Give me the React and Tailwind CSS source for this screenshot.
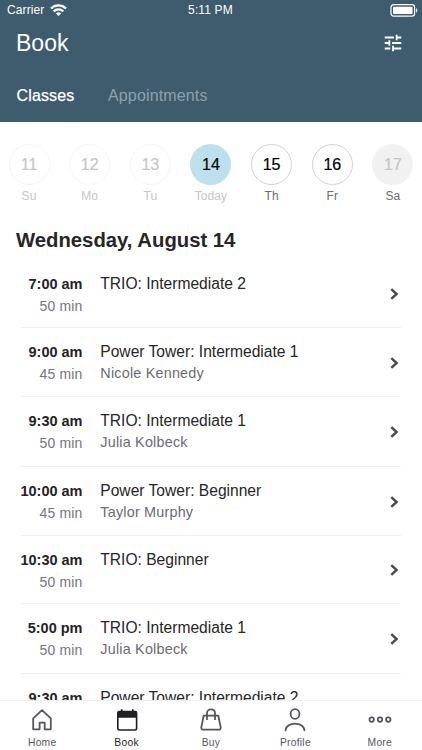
import React from 'react';
import clsx from 'clsx';
import { MdTune } from 'react-icons/md';

const days = [
    { num: '11', label: 'Su', state: 'past' },
    { num: '12', label: 'Mo', state: 'past' },
    { num: '13', label: 'Tu', state: 'past' },
    { num: '14', label: 'Today', state: 'today' },
    { num: '15', label: 'Th', state: 'open' },
    { num: '16', label: 'Fr', state: 'open' },
    { num: '17', label: 'Sa', state: 'closed' },
];

const classes = [
    { time: '7:00 am', length: '50 min', name: 'TRIO: Intermediate 2' },
    { time: '9:00 am', length: '45 min', name: 'Power Tower: Intermediate 1', teacher: 'Nicole Kennedy' },
    { time: '9:30 am', length: '50 min', name: 'TRIO: Intermediate 1', teacher: 'Julia Kolbeck' },
    { time: '10:00 am', length: '45 min', name: 'Power Tower: Beginner', teacher: 'Taylor Murphy' },
    { time: '10:30 am', length: '50 min', name: 'TRIO: Beginner' },
    { time: '5:00 pm', length: '50 min', name: 'TRIO: Intermediate 1', teacher: 'Julia Kolbeck' },
    { time: '9:30 am', name: 'Power Tower: Intermediate 2' },
];

const circleStyles = {
    past: 'border border-[#f6f6f6] text-[#c6c6c6]',
    today: 'bg-[#bce0ec] text-black',
    open: 'border border-[#d2d2d2] text-black',
    closed: 'bg-[#f1f1f1] text-[#c4c4c4]',
};

const StatusBar = () => (
    <div className="h-[20px] flex items-center justify-between pl-[7px] pr-[4px] text-[12px]">
        <div className="w-[120px] flex items-center gap-[6px]">
            <span className="tracking-[0.1px]">Carrier</span>
            <svg width="17" height="12" viewBox="0 0 17 12" fill="none" stroke="currentColor" strokeWidth="2.2">
                <path d="M1 4.5C5.2.3 11.8.3 16 4.5" />
                <path d="M3.7 7.4C6.4 4.8 10.6 4.8 13.3 7.4" />
                <path d="M8.5 12 5.9 9.4C7.4 8 9.6 8 11.1 9.4Z" fill="currentColor" stroke="none" />
            </svg>
        </div>
        <span className="mr-[4px] tracking-[0.15px]">5:11 PM</span>
        <div className="w-[120px] flex justify-end">
            <svg width="28" height="13" viewBox="0 0 28 13" fill="none">
                <rect x="1" y="0.7" width="23.6" height="11.4" rx="2.6" stroke="currentColor" strokeWidth="1.2" />
                <rect x="3" y="2.7" width="19.6" height="7.4" rx="0.8" fill="currentColor" />
                <path d="M26 4.2C27.7 4.8 27.7 8 26 8.6Z" fill="currentColor" />
            </svg>
        </div>
    </div>
);

const Header = () => (
    <header className="h-[122px] shrink-0 bg-[#3e5c6e] text-white">
        <StatusBar />
        <div className="h-[45px] flex items-center justify-between pl-[16px] pr-[18px]">
            <h1 className="text-[23px] leading-[28px]">Book</h1>
            <MdTune className="w-[22px] h-[22px]" />
        </div>
        <div className="h-[57px] flex items-center gap-[33.5px] pl-[16.5px] pt-[5px] text-[16px]">
            <span className="tracking-[0.15px] [-webkit-text-stroke:0.25px_currentColor]">Classes</span>
            <span className="tracking-[0.15px] text-[#8da1ad]">Appointments</span>
        </div>
    </header>
);

const DayPicker = () => (
    <div className="flex justify-between px-[8.5px] pt-[22px]">
        {days.map((day) => (
            <div key={day.num} className="w-[41px] flex flex-col items-center">
                <div className={clsx('w-[41px] h-[41px] rounded-full flex items-center justify-center text-[16px]', circleStyles[day.state])}>
                    <span className="[-webkit-text-stroke:0.2px_currentColor]">{day.num}</span>
                </div>
                <span
                    className={clsx(
                        'mt-[2px] text-[12px] leading-[18px] tracking-[0.1px]',
                        day.state === 'past' || day.state === 'today' ? 'text-[#c6c6c6]' : 'text-[#6c6c6c]'
                    )}
                >
                    {day.label}
                </span>
            </div>
        ))}
    </div>
);

const ClassRow = ({ item }) => (
    <div className={clsx('mx-[21px] shrink-0 flex border-b border-[#f0f0f0]', item.teacher ? 'h-[69.5px]' : 'h-[67.8px]')}>
        <div className="w-[61.5px] shrink-0 pt-[14.2px] text-right whitespace-nowrap">
            <div className="text-[14.5px] leading-[20px] font-bold text-[#242424] -ml-[4px]">{item.time}</div>
            {item.length && <div className="mt-[2px] text-[14px] leading-[21px] tracking-[0.15px] text-[#75757d]">{item.length}</div>}
        </div>
        <div className="grow pl-[17.8px] pt-[14.2px]">
            <div className="text-[15.6px] leading-[20px] text-[#262626]">{item.name}</div>
            {item.teacher && <div className="mt-[1px] text-[14.4px] leading-[20px] tracking-[0.2px] text-[#6b6b73]">{item.teacher}</div>}
        </div>
        <svg className="self-center mt-[1px] mr-[2px]" width="9" height="12" viewBox="0 0 9 12" fill="none" stroke="#4a4a4a" strokeWidth="2.4">
            <path d="M1.3 1.2 6.6 6 1.3 10.8" />
        </svg>
    </div>
);

const HomeIcon = () => (
    <svg width="24" height="24" viewBox="0 0 24 24" fill="none" stroke="currentColor" strokeWidth="1.8" strokeLinejoin="round">
        <path d="M3.2 21.3V10.4L12 2.2 20.8 10.4V21.3H14.7V14.6H9.6V21.3Z" />
    </svg>
);

const BookIcon = () => (
    <svg className="relative left-[0.7px]" width="24" height="24" viewBox="0 0 24 24" fill="none">
        <path d="M6.7 1.3V4M17.8 1.3V4" stroke="currentColor" strokeWidth="1.8" />
        <rect x="2.8" y="3.6" width="18.8" height="18.4" rx="1.6" stroke="currentColor" strokeWidth="1.6" />
        <path d="M2.4 9.7V5A2 2 0 0 1 4.4 3H20A2 2 0 0 1 22 5V9.7Z" fill="currentColor" />
    </svg>
);

const BuyIcon = () => (
    <svg width="24" height="24" viewBox="0 0 24 24" fill="none" stroke="currentColor" strokeWidth="1.8" strokeLinejoin="round" strokeLinecap="round">
        <path d="M4.7 7.6H19.3L21.7 19.4Q21.9 21.7 19.6 21.7H4.4Q2.1 21.7 2.3 19.4Z" />
        <path d="M8 11.2V5.2C8 .2 16 .2 16 5.2V11.2" />
    </svg>
);

const ProfileIcon = () => (
    <svg width="24" height="24" viewBox="0 0 24 24" fill="none" stroke="currentColor" strokeWidth="1.8" strokeLinecap="round">
        <ellipse cx="12" cy="6" rx="4.4" ry="4.9" />
        <path d="M2.6 22.3C3.2 13.3 20.8 13.3 21.4 22.3" />
    </svg>
);

const MoreIcon = () => (
    <svg width="24" height="24" viewBox="0 0 24 24" fill="none" stroke="currentColor" strokeWidth="1.8">
        <circle cx="3.7" cy="11.6" r="2.2" />
        <circle cx="12" cy="11.6" r="2.2" />
        <circle cx="20.3" cy="11.6" r="2.2" />
    </svg>
);

const tabs = [
    { label: 'Home', Icon: HomeIcon },
    { label: 'Book', Icon: BookIcon, active: true },
    { label: 'Buy', Icon: BuyIcon },
    { label: 'Profile', Icon: ProfileIcon },
    { label: 'More', Icon: MoreIcon },
];

const TabBar = () => (
    <nav className="h-[50px] shrink-0 grid grid-cols-5 border-t border-[#f0f0f0] bg-white">
        {tabs.map(({ label, Icon, active }) => (
            <div key={label} className={clsx('flex flex-col items-center pt-[7px]', active ? 'text-[#1f1f24]' : 'text-[#55555d]')}>
                <Icon />
                <span className="mt-[4px] text-[10.3px] leading-[14px] tracking-[0.25px]">{label}</span>
            </div>
        ))}
    </nav>
);

const App = () => {
    return (
        <div className="w-[422px] h-[750px] flex flex-col overflow-hidden bg-white font-['Liberation_Sans',Arial,sans-serif]">
            <Header />
            <main className="grow min-h-0 overflow-hidden flex flex-col">
                <DayPicker />
                <h2 className="mt-[20px] pl-[16px] text-[20.3px] leading-[30px] font-bold text-[#262626]">Wednesday, August 14</h2>
                <div className="mt-[5px] flex flex-col">
                    {classes.map((item, i) => (
                        <ClassRow key={i} item={item} />
                    ))}
                </div>
            </main>
            <TabBar />
        </div>
    );
};

export default App;
